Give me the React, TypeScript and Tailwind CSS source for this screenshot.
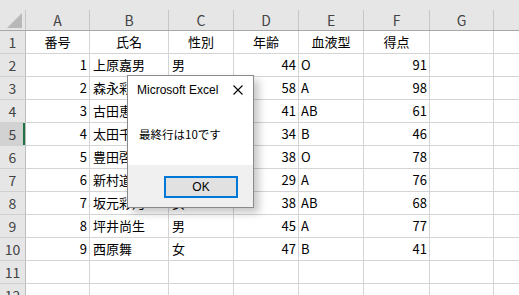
const cols = [
  { key: "A", w: "w-[64px]" },
  { key: "B", w: "w-[79px]" },
  { key: "C", w: "w-[65px]" },
  { key: "D", w: "w-[65px]" },
  { key: "E", w: "w-[65px]" },
  { key: "F", w: "w-[66px]" },
  { key: "G", w: "w-[64px]" },
];

type Row = { no: number; cells: [string, string, string, string, string, string] };

const rows: Row[] = [
  { no: 2, cells: ["1", "上原嘉男", "男", "44", "O", "91"] },
  { no: 3, cells: ["2", "森永彩香", "女", "58", "A", "98"] },
  { no: 4, cells: ["3", "古田恵子", "女", "41", "AB", "61"] },
  { no: 5, cells: ["4", "太田千尋", "女", "34", "B", "46"] },
  { no: 6, cells: ["5", "豊田啓介", "男", "38", "O", "78"] },
  { no: 7, cells: ["6", "新村道子", "女", "29", "A", "76"] },
  { no: 8, cells: ["7", "坂元彩乃", "女", "38", "AB", "68"] },
  { no: 9, cells: ["8", "坪井尚生", "男", "45", "A", "77"] },
  { no: 10, cells: ["9", "西原舞", "女", "47", "B", "41"] },
];

// alignment per column: right for numbers, left for text
const align = ["justify-end pr-[2px]", "justify-start pl-[3px]", "justify-start pl-[3px]", "justify-end pr-[2px]", "justify-start pl-[2px]", "justify-end pr-[2px]"];

function RowHead({ n, active }: { n: number; active?: boolean }) {
  return (
    <div
      className={`relative w-[26px] shrink-0 flex items-center justify-center border-r border-b border-r-[#bdbdbd] border-b-[#d0d0d0] text-[14px] text-[#444] ${
        active ? "bg-[#d2d2d2]" : "bg-[#e6e6e6]"
      }`}
    >
      {n}
      {active && <div className="absolute right-0 top-0 bottom-0 w-[2px] bg-[#217346]" />}
    </div>
  );
}

export default function App() {
  return (
    <div
      className="relative w-[519px] h-[295px] overflow-hidden bg-white text-black"
      style={{ fontFamily: '"Noto Sans CJK JP", "Noto Sans", sans-serif' }}
    >
      <div className="h-[10px] bg-[#e6e6e6]" />

      {/* column headers */}
      <div className="flex h-[21px] bg-[#e6e6e6] border-b border-[#a8a8a8]">
        <div className="w-[26px] shrink-0 border-r border-[#c6c6c6] flex items-end justify-end pr-[3px] pb-[2px]">
          <svg width="15" height="15" viewBox="0 0 15 15">
            <polygon points="15,0 15,15 0,15" fill="#b8b8b8" />
          </svg>
        </div>
        {cols.map((c) => (
          <div key={c.key} className={`${c.w} shrink-0 border-r border-[#c6c6c6] flex items-center justify-center text-[14px] text-[#444]`}>
            {c.key}
          </div>
        ))}
        <div className="flex-1" />
      </div>

      {/* row 1 headings */}
      <div className="flex h-[23px]">
        <RowHead n={1} />
        {["番号", "氏名", "性別", "年齢", "血液型", "得点", ""].map((t, i) => (
          <div key={i} className={`${cols[i].w} shrink-0 border-r border-b border-[#d4d4d4] flex items-center justify-center text-[13px] pb-px`}>
            {t}
          </div>
        ))}
        <div className="flex-1 border-b border-[#d4d4d4]" />
      </div>

      {rows.map((r) => (
        <div key={r.no} className="flex h-[23px]">
          <RowHead n={r.no} active={r.no === 5} />
          {r.cells.map((t, i) => (
            <div key={i} className={`${cols[i].w} shrink-0 border-r border-b border-[#d4d4d4] flex items-center text-[13px] pb-px ${align[i]}`}>
              {t}
            </div>
          ))}
          <div className={`${cols[6].w} shrink-0 border-r border-b border-[#d4d4d4]`} />
          <div className="flex-1 border-b border-[#d4d4d4]" />
        </div>
      ))}

      {[11, 12].map((n) => (
        <div key={n} className="flex h-[23px]">
          <RowHead n={n} />
          {cols.map((c) => (
            <div key={c.key} className={`${c.w} shrink-0 border-r border-b border-[#d4d4d4]`} />
          ))}
          <div className="flex-1 border-b border-[#d4d4d4]" />
        </div>
      ))}

      {/* message box */}
      <div className="absolute left-[127px] top-[75px] w-[127px] h-[133px] border border-[#8a8a8a] bg-white flex flex-col shadow-[5px_5px_8px_rgba(0,0,0,0.22)]">
        <div className="h-[28px] flex items-center justify-between pl-[9px] pr-[10px]">
          <span className="text-[12px] text-black" style={{ fontFamily: '"Liberation Sans", Arial, sans-serif' }}>
            Microsoft Excel
          </span>
          <svg width="10" height="10" viewBox="0 0 10 10">
            <path d="M0.5 0.5 L9.5 9.5 M9.5 0.5 L0.5 9.5" stroke="#000" strokeWidth="1.1" />
          </svg>
        </div>
        <div className="h-[61px] flex items-center pl-[11px] text-[11.5px]">最終行は10です</div>
        <div className="h-[42px] bg-[#f0f0f0] flex justify-end items-start pt-[11px] pr-[15px]">
          <div className="w-[74px] h-[22px] border-2 border-[#0078d7] bg-[#e1e1e1] flex items-center justify-center text-[12px]" style={{ fontFamily: '"Liberation Sans", Arial, sans-serif' }}>
            OK
          </div>
        </div>
      </div>
    </div>
  );
}
